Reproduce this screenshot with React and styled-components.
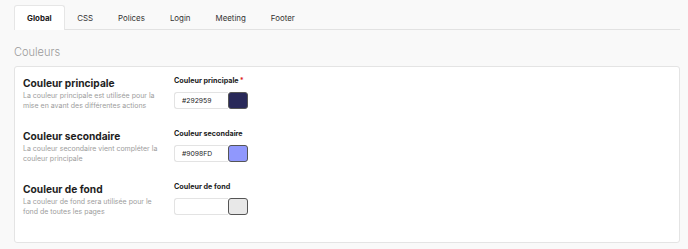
import React from "react";
import styled, { createGlobalStyle } from "styled-components";

const GlobalStyle = createGlobalStyle`
  html, body { margin: 0; padding: 0; background: #f9f9f9; }
  body { font-family: Inter, "Liberation Sans", sans-serif; color: #222; }
`;

const Page = styled.div`
  padding: 5px 8px 0 14px;
`;

const TabBar = styled.div`
  display: flex;
  border-bottom: 1px solid #e2e2e2;
  height: 24px;
`;

const Tab = styled.div`
  padding: 0 ${({ $active }) => ($active ? 12 : 11.5)}px;
  font-size: 7.9px;
  font-weight: ${({ $active }) => ($active ? 700 : 400)};
  color: ${({ $active }) => ($active ? "#1a1a1a" : "#333")};
  display: flex;
  align-items: center;
  height: 25px;
  box-sizing: border-box;
  background: ${({ $active }) => ($active ? "#fff" : "transparent")};
  border: 1px solid ${({ $active }) => ($active ? "#e6e6e6" : "transparent")};
  border-bottom: none;
  border-radius: 3px 3px 0 0;
`;

const SectionTitle = styled.div`
  font-size: 11px;
  font-weight: 300;
  color: #999;
  margin: 15px 0 7px;
  line-height: 14px;
`;

const Card = styled.div`
  background: #fff;
  border: 1px solid #e4e4e4;
  border-radius: 3px;
  padding: 9px 8px 26px;
  display: flex;
  flex-direction: column;
  gap: 19px;
`;

const Row = styled.div`
  display: grid;
  grid-template-columns: 151px 1fr;
`;

const Info = styled.div``;

const Title = styled.div`
  font-size: 10.2px;
  font-weight: 700;
  color: #1e1e1e;
  line-height: 13px;
  margin-top: 1px;
`;

const Desc = styled.div`
  font-size: 7px;
  color: #9d9d9d;
  line-height: 9.5px;
  margin-top: 1px;
  width: 136px;
`;

const Field = styled.div`
  display: flex;
  flex-direction: column;
  gap: 6px;
`;

const Label = styled.div`
  font-size: 7.2px;
  font-weight: 700;
  color: #222;
  line-height: 10px;
  span { color: #d22; margin-left: 1px; }
`;

const ColorInput = styled.div`
  display: flex;
  height: 17px;
`;

const Hex = styled.div`
  width: 54px;
  box-sizing: border-box;
  border: 1px solid #e3e3e3;
  border-right: none;
  border-radius: 3px 0 0 3px;
  font-size: 6.8px;
  color: #222;
  display: flex;
  align-items: center;
  padding-left: 7px;
  background: #fff;
`;

const Swatch = styled.div`
  width: 20px;
  box-sizing: border-box;
  border: 1px solid #555;
  border-radius: 3px;
  background: ${({ $color }) => $color};
`;

const rows = [
  {
    title: "Couleur principale",
    desc: "La couleur principale est utilisée pour la mise en avant des différentes actions",
    value: "#292959",
    color: "#292959",
    required: true,
  },
  {
    title: "Couleur secondaire",
    desc: "La couleur secondaire vient compléter la couleur principale",
    value: "#9098FD",
    color: "#9098FD",
  },
  {
    title: "Couleur de fond",
    desc: "La couleur de fond sera utilisée pour le fond de toutes les pages",
    value: "",
    color: "#e8e8e8",
  },
];

const tabs = ["Global", "CSS", "Polices", "Login", "Meeting", "Footer"];

export default function App() {
  return (
    <>
      <GlobalStyle />
      <Page>
        <TabBar>
          {tabs.map((t, i) => (
            <Tab key={t} $active={i === 0}>{t}</Tab>
          ))}
        </TabBar>
        <SectionTitle>Couleurs</SectionTitle>
        <Card>
          {rows.map((r) => (
            <Row key={r.title}>
              <Info>
                <Title>{r.title}</Title>
                <Desc>{r.desc}</Desc>
              </Info>
              <Field>
                <Label>
                  {r.title}
                  {r.required && <span>*</span>}
                </Label>
                <ColorInput>
                  <Hex>{r.value}</Hex>
                  <Swatch $color={r.color} />
                </ColorInput>
              </Field>
            </Row>
          ))}
        </Card>
      </Page>
    </>
  );
}
